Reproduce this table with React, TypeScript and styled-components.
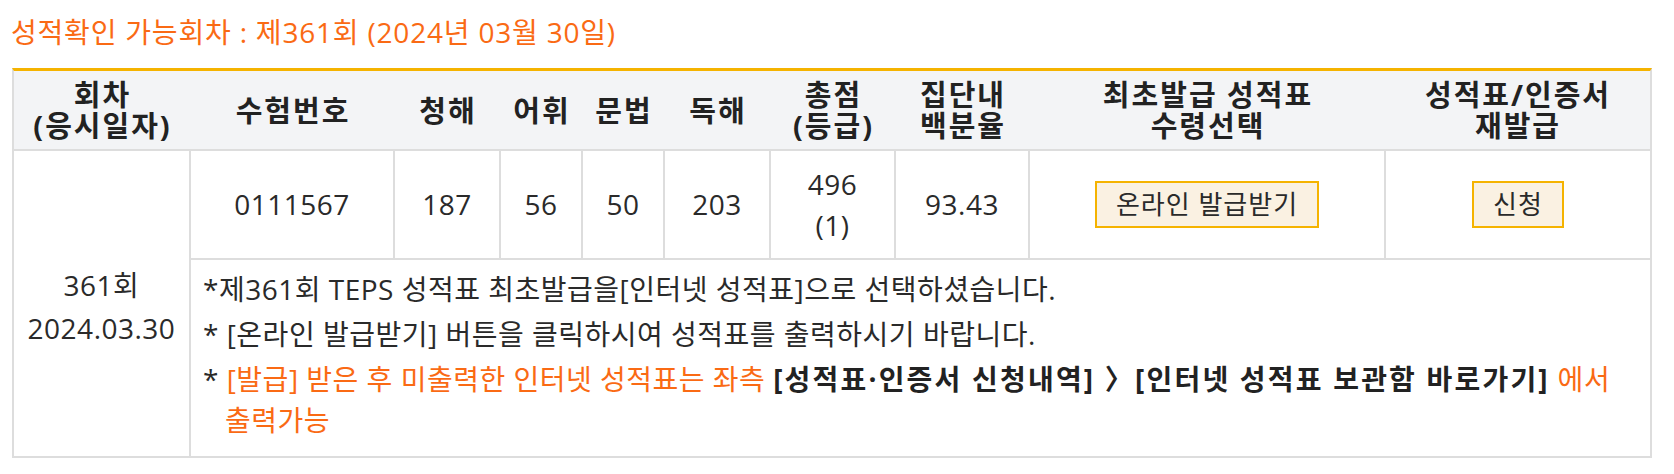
import React from "react";
import styled, { createGlobalStyle } from "styled-components";

const GlobalStyle = createGlobalStyle`
  html, body {
    margin: 0;
    padding: 0;
    background: #ffffff;
  }
  body {
    font-family: "Open Sans", "Noto Sans CJK KR", sans-serif;
    color: #222222;
    word-break: keep-all;
  }
  * { box-sizing: border-box; }
`;

const COLS = "177px 204px 106px 82px 82px 106px 125px 134px 356px 1fr";

const Page = styled.div`
  padding: 12px 0 0 12px;
`;

const Title = styled.h2`
  margin: 0 0 16px -1px;
  font-size: 28px;
  line-height: 40px;
  letter-spacing: 0.8px;
  font-weight: 400;
  color: #fa6a14;
`;

const Board = styled.section`
  width: 1640px;
  border: 2px solid #dddddd;
  border-top: 3px solid #f5b300;
`;

const HeaderRow = styled.div`
  display: grid;
  grid-template-columns: ${COLS};
  height: 80px;
  background: #f3f4f6;
  border-bottom: 2px solid #dddddd;
`;

const HeadCell = styled.div`
  display: flex;
  align-items: center;
  justify-content: center;
  text-align: center;
  font-size: 29px;
  line-height: 31px;
  letter-spacing: 2px;
  font-weight: 700;
  color: #222222;
`;

const BodyGrid = styled.div`
  display: grid;
  grid-template-columns: ${COLS};
  grid-template-rows: 107px auto;
`;

const Cell = styled.div<{ $last?: boolean }>`
  display: flex;
  flex-direction: column;
  align-items: center;
  justify-content: center;
  text-align: center;
  font-size: 28px;
  line-height: 41px;
  letter-spacing: 0.5px;
  color: #2a2a2a;
  border-right: ${(p) => (p.$last ? "none" : "2px solid #dddddd")};
`;

const DateCell = styled(Cell)`
  grid-row: 1 / span 2;
  line-height: 43px;
  padding-top: 6px;
`;

const Button = styled.button`
  height: 47px;
  padding: 0 19px;
  border: 2px solid #f5b300;
  background: #faf1e2;
  color: #2a2a2a;
  font-family: "Open Sans", "Noto Sans CJK KR", sans-serif;
  font-size: 26px;
  line-height: 43px;
  letter-spacing: 1px;
  cursor: pointer;
`;

const NotesCell = styled.div`
  grid-column: 2 / span 9;
  border-top: 2px solid #dddddd;
  padding: 9px 14px 15px 12px;
  font-size: 28px;
  letter-spacing: 0.5px;
  color: #2a2a2a;
`;

const Note = styled.p<{ $hang?: boolean }>`
  margin: 0 0 4px 0;
  line-height: 41px;
  padding-left: ${(p) => (p.$hang ? "22px" : "0")};
  text-indent: ${(p) => (p.$hang ? "-22px" : "0")};

  &:last-child {
    margin-bottom: 0;
  }
`;

const Accent = styled.span`
  color: #fa6a14;
`;

const Strong = styled.strong`
  font-weight: 700;
  letter-spacing: 2.2px;
  color: #222222;
`;

const headers: React.ReactNode[] = [
  <>회차<br />(응시일자)</>,
  "수험번호",
  "청해",
  "어휘",
  "문법",
  "독해",
  <>총점<br />(등급)</>,
  <>집단내<br />백분율</>,
  <>최초발급 성적표<br />수령선택</>,
  <>성적표/인증서<br />재발급</>,
];

export default function App() {
  return (
    <>
      <GlobalStyle />
      <Page>
        <Title>성적확인 가능회차 : 제361회 (2024년 03월 30일)</Title>
        <Board>
          <HeaderRow>
            {headers.map((h, i) => (
              <HeadCell key={i}>{h}</HeadCell>
            ))}
          </HeaderRow>
          <BodyGrid>
            <DateCell>
              <span>361회</span>
              <span>2024.03.30</span>
            </DateCell>
            <Cell>0111567</Cell>
            <Cell>187</Cell>
            <Cell>56</Cell>
            <Cell>50</Cell>
            <Cell>203</Cell>
            <Cell>
              <span>496</span>
              <span>(1)</span>
            </Cell>
            <Cell>93.43</Cell>
            <Cell>
              <Button type="button">온라인 발급받기</Button>
            </Cell>
            <Cell $last>
              <Button type="button">신청</Button>
            </Cell>
            <NotesCell>
              <Note>*제361회 TEPS 성적표 최초발급을[인터넷 성적표]으로 선택하셨습니다.</Note>
              <Note $hang>* [온라인 발급받기] 버튼을 클릭하시여 성적표를 출력하시기 바랍니다.</Note>
              <Note $hang>
                *{" "}
                <Accent>[발급] 받은 후 미출력한 인터넷 성적표는 좌측 </Accent>
                <Strong>[성적표·인증서 신청내역] 〉[인터넷 성적표 보관함 바로가기]</Strong>
                <Accent> 에서 출력가능</Accent>
              </Note>
            </NotesCell>
          </BodyGrid>
        </Board>
      </Page>
    </>
  );
}
